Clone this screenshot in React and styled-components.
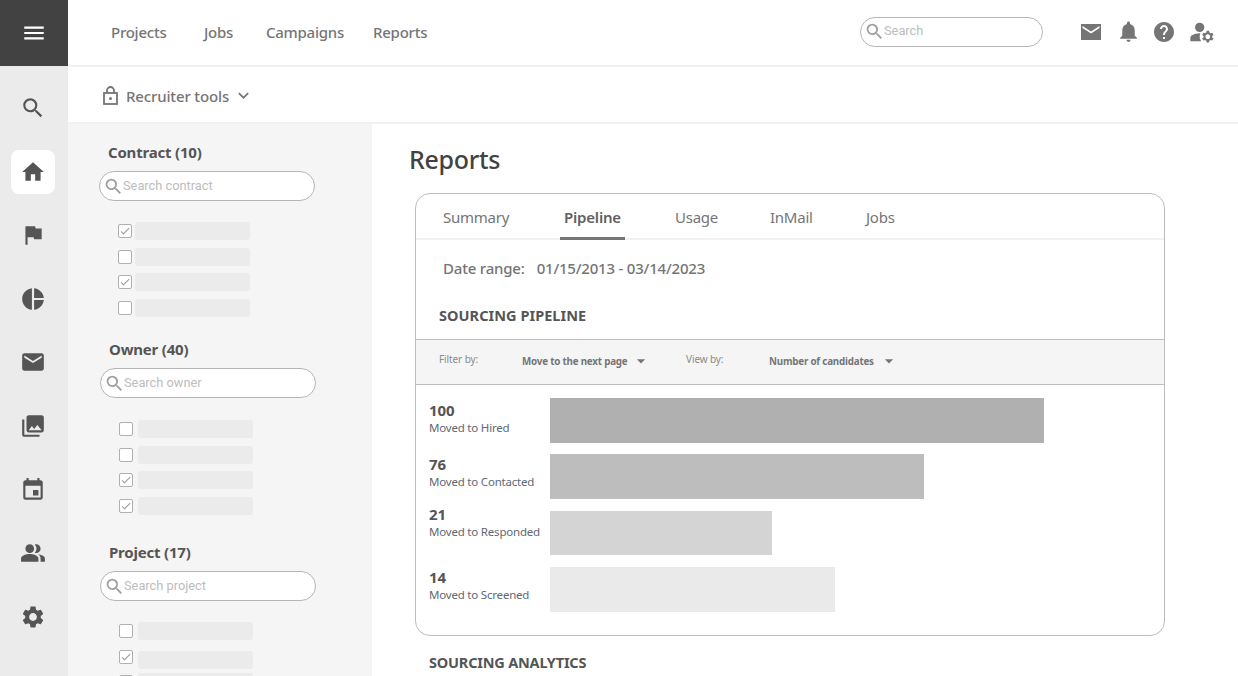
import React from "react";
import styled, { createGlobalStyle } from "styled-components";
import {
  MdMenu, MdSearch, MdHome, MdFlag, MdPieChart, MdEmail, MdPhotoLibrary, MdEvent, MdPeopleAlt,
  MdSettings, MdNotifications, MdHelp, MdManageAccounts, MdKeyboardArrowDown, MdArrowDropDown, MdCheck,
} from "react-icons/md";

const FONT = `"Noto Sans", "Open Sans", sans-serif`;

const Global = createGlobalStyle`
  html, body { margin: 0; padding: 0; background: #fff; }
  body { font-family: ${FONT}; }
  * { box-sizing: border-box; }
  input::placeholder { color: #bdbdbd; opacity: 1; }
`;

const Page = styled.div`
  display: grid;
  grid-template-columns: 68px 1fr;
  width: 1238px;
  height: 676px;
  overflow: hidden;
`;

const Rail = styled.aside`
  background: #ebebeb;
  display: flex;
  flex-direction: column;
  align-items: center;
`;
const Burger = styled.div`
  width: 68px;
  height: 66px;
  background: #424242;
  color: #fff;
  display: flex;
  align-items: center;
  justify-content: center;
  font-size: 26px;
  margin-bottom: 20px;
  flex: none;
`;
const RailItem = styled.div`
  width: 44px;
  height: 44px;
  margin: 0 2px 19.6px 0;
  flex: none;
  display: flex;
  align-items: center;
  justify-content: center;
  font-size: 26px;
  color: #555;
  border-radius: 8px;
  background: ${(p) => (p.$active ? "#fff" : "transparent")};
`;

const Body = styled.div`
  display: flex;
  flex-direction: column;
  min-width: 0;
  height: 676px;
`;
const TopBar = styled.header`
  height: 67px;
  flex: none;
  border-bottom: 2px solid #f1f1f1;
  display: flex;
  align-items: center;
  padding: 0 0 2px 43px;
`;
const NavLink = styled.a`
  font-size: 15px;
  font-weight: 500;
  letter-spacing: -0.25px;
  color: #757575;
  width: ${(p) => p.$w}px;
  flex: none;
`;
const TopSearch = styled.div`
  margin-left: 415px;
  flex: none;
`;
const TopIcons = styled.div`
  display: flex;
  align-items: center;
  margin-left: 36px;
  color: #757575;
  svg { display: block; flex: none; }
`;
const SharpMail = () => (
  <svg width="24" height="24" viewBox="0 0 24 24" fill="currentColor" style={{ marginRight: 13 }}>
    <path fillRule="evenodd" d="M2 4h20v16H2V4zm10 9.5L20.5 8V6L12 11.5 3.5 6v2L12 13.5z" />
  </svg>
);

const ToolBar = styled.div`
  height: 57px;
  flex: none;
  border-bottom: 2px solid #f1f1f1;
  display: flex;
  align-items: center;
  padding: 2px 0 0 35px;
  color: #757575;
  font-size: 15px;
  font-weight: 500;
  letter-spacing: -0.15px;
  gap: 3px;
`;
const LockGlyph = styled.svg`
  width: 15px;
  height: 19px;
  margin-right: 5px;
  flex: none;
`;
const ChevIcon = styled(MdKeyboardArrowDown)`
  font-size: 21px;
  margin-left: 1px;
`;

const Columns = styled.div`
  display: flex;
  flex: 1;
  min-height: 0;
`;

const Filters = styled.section`
  width: 304px;
  flex: none;
  background: #f5f5f5;
  padding: 16px 0 0 31px;
  overflow: hidden;
`;
const FilterGroup = styled.div`
  margin-left: ${(p) => p.$x}px;
  margin-bottom: ${(p) => p.$mb}px;
`;
const FilterTitle = styled.h3`
  margin: 0 0 7px 9px;
  font-size: 15px;
  line-height: 24px;
  font-weight: 700;
  letter-spacing: -0.2px;
  color: #555;
`;
const Pill = styled.label`
  display: flex;
  align-items: center;
  height: 30px;
  width: ${(p) => p.$w}px;
  border: 1px solid #b5b5b5;
  border-radius: 15px;
  background: #fff;
  padding-left: 3px;
  color: #9e9e9e;
  svg { flex: none; font-size: 21px; }
`;
const PillInput = styled.input`
  border: 0;
  outline: 0;
  background: transparent;
  padding: 0;
  margin: -2px 0 0 -1px;
  min-width: 0;
  flex: 1;
  font-family: Roboto, sans-serif;
  font-size: 12.8px;
`;
const Options = styled.div`
  display: flex;
  flex-direction: column;
  margin: ${(p) => p.$top}px 0 0 19px;
`;
const OptionRow = styled.div`
  display: flex;
  align-items: center;
  height: 18px;
  margin-bottom: ${(p) => p.$mb ?? 7.5}px;
  gap: ${(p) => p.$gap}px;
`;
const Box = styled.span`
  width: 14px;
  height: 14px;
  flex: none;
  border: 1.5px solid #b0b0b0;
  border-radius: 2px;
  background: #fff;
  color: #9a9a9a;
  display: flex;
  align-items: center;
  justify-content: center;
  font-size: 12px;
`;
const Skeleton = styled.span`
  width: 114.5px;
  height: 18px;
  border-radius: 3px;
  background: #ebebeb;
  transform: translateY(${(p) => p.$shift || 0}px);
`;

const Main = styled.main`
  flex: 1;
  min-width: 0;
  padding: 15px 0 0 37px;
  overflow: hidden;
`;
const Title = styled.h1`
  margin: 0 0 14px;
  font-size: 25px;
  line-height: 40px;
  font-weight: 500;
  letter-spacing: -0.3px;
  color: #424242;
`;
const Card = styled.div`
  width: 750px;
  height: 443px;
  margin-left: 6px;
  border: 1px solid #bdbdbd;
  border-radius: 15px;
  display: flex;
  flex-direction: column;
`;
const Tabs = styled.nav`
  height: 46px;
  flex: none;
  border-bottom: 2px solid #f1f1f1;
  display: flex;
  align-items: stretch;
  padding-left: 23px;
`;
const Tab = styled.div`
  width: ${(p) => p.$w}px;
  margin-left: ${(p) => p.$ml || 0}px;
  flex: none;
  margin-bottom: -2px;
  padding: 10px 4px 0;
  font-size: 15px;
  line-height: 26px;
  white-space: nowrap;
  letter-spacing: ${(p) => (p.$active ? "-0.2px" : "-0.25px")};
  font-weight: ${(p) => (p.$active ? 600 : 400)};
  color: ${(p) => (p.$active ? "#616161" : "#757575")};
  border-bottom: 3px solid ${(p) => (p.$active ? "#757575" : "transparent")};
`;
const DateRow = styled.div`
  display: flex;
  padding: 15px 0 0 27px;
  font-size: 15px;
  line-height: 26px;
  font-weight: 500;
  letter-spacing: -0.2px;
  color: #757575;
  gap: 12px;
`;
const SectionLabel = styled.h2`
  margin: ${(p) => p.$m};
  font-size: 14.5px;
  line-height: 24px;
  font-weight: 700;
  letter-spacing: ${(p) => p.$ls}px;
  color: #555;
`;
const FilterBar = styled.div`
  height: 46px;
  flex: none;
  margin-top: 12px;
  background: #f5f5f5;
  border-top: 1px solid #bdbdbd;
  border-bottom: 1px solid #bdbdbd;
  display: flex;
  align-items: center;
  padding: 0 0 2px 23px;
`;
const SmallLabel = styled.span`
  flex: none;
  width: ${(p) => p.$w}px;
  font-size: 10px;
  letter-spacing: -0.1px;
  color: #8a8a8a;
  margin-top: -5px;
`;
const SelectValue = styled.span`
  display: flex;
  align-items: center;
  flex: none;
  width: ${(p) => p.$w}px;
  font-size: 9.8px;
  font-weight: 700;
  letter-spacing: -0.2px;
  color: #757575;
  svg { font-size: 20px; margin-left: ${(p) => p.$gap}px; }
`;
const Chart = styled.div`
  padding: 13px 0 0 13px;
  display: flex;
  flex-direction: column;
`;
const ChartRow = styled.div`
  display: flex;
  height: ${(p) => p.$h}px;
  margin-bottom: ${(p) => p.$mb}px;
`;
const RowLabel = styled.div`
  width: 121px;
  flex: none;
  margin-top: ${(p) => p.$pt}px;
`;
const Count = styled.div`
  font-size: 15px;
  line-height: 19px;
  font-weight: 700;
  letter-spacing: -0.1px;
  color: #555;
`;
const Desc = styled.div`
  font-size: 11.5px;
  line-height: 15px;
  letter-spacing: -0.2px;
  color: #5f6873;
`;
const Bar = styled.div`
  height: 100%;
  background: ${(p) => p.$c};
`;

const SearchBox = ({ w, placeholder }) => (
  <Pill $w={w}>
    <MdSearch />
    <PillInput placeholder={placeholder} />
  </Pill>
);

const Option = ({ checked, gap, mb, shift }) => (
  <OptionRow $gap={gap} $mb={mb}>
    <Box>{checked && <MdCheck />}</Box>
    <Skeleton $shift={shift} />
  </OptionRow>
);

const groups = [
  { t: "Contract (10)", p: "Search contract", x: 0, gap: 3, mb: 13, top: 21, o: [1, 0, 1, 0] },
  { t: "Owner (40)", p: "Search owner", x: 1, gap: 5, mb: 18, top: 22, o: [0, 0, 1, 1] },
  { t: "Project (17)", p: "Search project", x: 1, gap: 5, mb: 0, top: 21, o: [0, 1, 0], shifts: [0, 3, 0], mbs: [8, 7, 0] },
];

const rows = [
  { n: "100", d: "Moved to Hired", w: 494, c: "#b0b0b0", h: 45, mb: 11, pt: 3 },
  { n: "76", d: "Moved to Contacted", w: 374, c: "#bdbdbd", h: 45, mb: 12, pt: 1 },
  { n: "21", d: "Moved to Responded", w: 222, c: "#d4d4d4", h: 44, mb: 12, pt: -6 },
  { n: "14", d: "Moved to Screened", w: 285, c: "#eaeaea", h: 45, mb: 0, pt: 1 },
];

export default function App() {
  return (
    <Page>
      <Global />
      <Rail>
        <Burger><MdMenu /></Burger>
        <RailItem><MdSearch /></RailItem>
        <RailItem $active><MdHome /></RailItem>
        <RailItem><MdFlag /></RailItem>
        <RailItem><MdPieChart /></RailItem>
        <RailItem><MdEmail /></RailItem>
        <RailItem><MdPhotoLibrary /></RailItem>
        <RailItem><MdEvent /></RailItem>
        <RailItem><MdPeopleAlt /></RailItem>
        <RailItem><MdSettings /></RailItem>
      </Rail>
      <Body>
        <TopBar>
          <NavLink $w={93}>Projects</NavLink>
          <NavLink $w={62}>Jobs</NavLink>
          <NavLink $w={107}>Campaigns</NavLink>
          <NavLink $w={72}>Reports</NavLink>
          <TopSearch><SearchBox w={183} placeholder="Search" /></TopSearch>
          <TopIcons>
            <SharpMail />
            <MdNotifications size={25} style={{ marginRight: 11 }} />
            <MdHelp size={24} style={{ marginRight: 12 }} />
            <MdManageAccounts size={28} />
          </TopIcons>
        </TopBar>
        <ToolBar>
          <LockGlyph viewBox="0 0 15 19" fill="none" stroke="currentColor" strokeWidth="1.8">
            <rect x="1" y="7" width="13" height="11" />
            <path d="M4 7V4.5a3.5 3.5 0 0 1 7 0V7" />
            <circle cx="7.5" cy="12.5" r="1.5" fill="currentColor" stroke="none" />
          </LockGlyph>
          <span>Recruiter tools</span>
          <ChevIcon />
        </ToolBar>
        <Columns>
          <Filters>
            {groups.map((g) => (
              <FilterGroup key={g.t} $x={g.x} $mb={g.mb}>
                <FilterTitle>{g.t}</FilterTitle>
                <SearchBox w={216} placeholder={g.p} />
                <Options $top={g.top}>
                  {g.o.map((c, i) => (
                    <Option key={i} checked={!!c} gap={g.gap} mb={g.mbs?.[i]} shift={g.shifts?.[i]} />
                  ))}
                </Options>
              </FilterGroup>
            ))}
          </Filters>
          <Main>
            <Title>Reports</Title>
            <Card>
              <Tabs>
                <Tab $w={121}>Summary</Tab>
                <Tab $w={65} $active>Pipeline</Tab>
                <Tab $w={95} $ml={46}>Usage</Tab>
                <Tab $w={96}>InMail</Tab>
                <Tab $w={60}>Jobs</Tab>
              </Tabs>
              <DateRow>
                <span>Date range:</span>
                <span>01/15/2013 - 03/14/2023</span>
              </DateRow>
              <SectionLabel $m="22px 0 0 23px" $ls={0.05}>SOURCING PIPELINE</SectionLabel>
              <FilterBar>
                <SmallLabel $w={83}>Filter by:</SmallLabel>
                <SelectValue $w={164} $gap={4}>Move to the next page<MdArrowDropDown /></SelectValue>
                <SmallLabel $w={83}>View by:</SmallLabel>
                <SelectValue $w={140} $gap={5}>Number of candidates<MdArrowDropDown /></SelectValue>
              </FilterBar>
              <Chart>
                {rows.map((r) => (
                  <ChartRow key={r.n} $mb={r.mb} $h={r.h}>
                    <RowLabel $pt={r.pt}>
                      <Count>{r.n}</Count>
                      <Desc>{r.d}</Desc>
                    </RowLabel>
                    <Bar $c={r.c} style={{ width: r.w }} />
                  </ChartRow>
                ))}
              </Chart>
            </Card>
            <SectionLabel $m="14px 0 0 20px" $ls={-0.2}>SOURCING ANALYTICS</SectionLabel>
          </Main>
        </Columns>
      </Body>
    </Page>
  );
}
